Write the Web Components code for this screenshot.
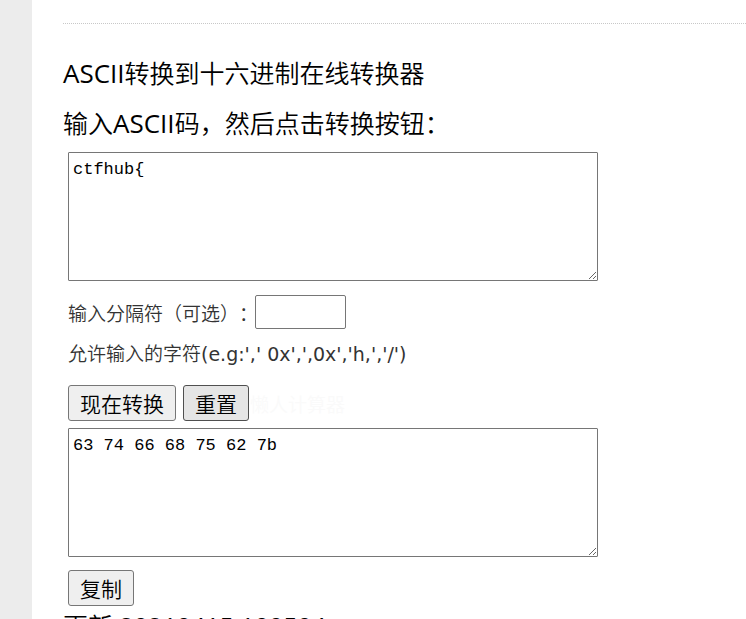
<!DOCTYPE html>
<html lang="zh-CN">
<head>
<meta charset="utf-8">
<title>ASCII转换到十六进制在线转换器</title>
<style>
  body {
    margin: 0;
    background: #fff;
    color: #333;
    font: 350 19px/40px "Open Sans", "Noto Sans CJK SC", sans-serif;
  }
  .latin { font-size: 26px; line-height: 1; font-weight: 400; }
  .stamp { font-weight: 400; }
</style>
</head>
<body>
<page-frame>
  <section-title><span class="latin">ASCII</span>转换到十六进制在线转换器</section-title>
  <section-title>输入<span class="latin">ASCII</span>码，然后点击转换按钮：</section-title>
  <hex-converter></hex-converter>
  <section-title compact>更新 <span class="stamp">20210415 100504</span></section-title>
</page-frame>
<script>
  function define(name, html) {
    customElements.define(name, class extends HTMLElement {
      constructor() {
        super();
        this.attachShadow({ mode: 'open' }).innerHTML = html;
      }
    });
  }

  define('page-frame', `
    <style>
      :host { display: flex; height: 100vh; overflow: hidden; }
      .gutter { flex: none; width: 32px; background: #ececec; }
      main { flex: 1; min-width: 0; padding: 23px 0 0 31px; }
      .rule { border: 0; border-top: 1px dotted #c8c8c8; margin: 0 0 24px; }
    </style>
    <div class="gutter"></div>
    <main><hr class="rule"><slot></slot></main>`);

  define('section-title', `
    <style>
      :host { display: block; color: #000; }
      h2 { margin: 0; font-size: 25px; line-height: 50px; font-weight: inherit; }
      :host([compact]) h2 { line-height: 40px; }
    </style>
    <h2><slot></slot></h2>`);

  define('text-area', `
    <style>
      :host { display: block; }
      textarea {
        display: block; box-sizing: border-box; width: 530px; max-width: 100%; height: 129px;
        margin: 0; padding: 4px; border: 1px solid #767676; border-radius: 1px;
        background: #fff; color: #000; overflow: auto; resize: both;
        font: 17px/26px "Liberation Mono", "Noto Sans CJK SC", monospace;
      }
    </style>
    <textarea></textarea>`);

  define('push-button', `
    <style>
      :host { display: block; }
      button {
        display: block; box-sizing: border-box; height: 36px; margin: 0; padding: 2px 11px 0;
        border: 1px solid #767676; border-radius: 3px; background: #efefef; color: #000;
        font: 350 21px/32px "Open Sans", "Noto Sans CJK SC", sans-serif;
      }
      :host([active]) button { background: #e5e5e5; border-color: #4f4f4f; }
    </style>
    <button type="button"><slot></slot></button>`);

  customElements.define('hex-converter', class extends HTMLElement {
    constructor() {
      super();
      const root = this.attachShadow({ mode: 'open' });
      root.innerHTML = `
        <style>
          :host { display: block; padding: 4px 5px 0; }
          .separator { display: flex; align-items: center; height: 34px; padding-top: 14px; }
          .separator label { padding-top: 4px; margin-right: -3px; text-spacing-trim: space-all; }
          input {
            box-sizing: border-box; width: 91px; height: 34px; margin: 0; padding: 2px 4px;
            border: 1px solid #767676; border-radius: 2px; background: #fff; font: inherit; color: #000;
          }
          .hint { height: 40px; padding: 5px 0 11px; }
          .hint span { font-family: "DejaVu Sans", sans-serif; font-weight: 400; }
          .actions { display: flex; align-items: center; gap: 7px; height: 36px; margin-bottom: 7px; }
          .mark { color: #fafafa; margin-left: -6px; padding-top: 4px; }
          .copy { display: flex; padding-top: 13px; }
        </style>
        <text-area id="source"></text-area>
        <div class="separator">
          <label for="sep">输入分隔符（可选）：</label><input id="sep" type="text">
        </div>
        <div class="hint">允许输入的字符<span>(e.g:',' 0x',',0x','h,','/')</span></div>
        <div class="actions">
          <push-button id="convert">现在转换</push-button>
          <push-button id="reset" active>重置</push-button>
          <span class="mark">懒人计算器</span>
        </div>
        <text-area id="result"></text-area>
        <div class="copy"><push-button id="copy">复制</push-button></div>`;
      const area = (id, label) => {
        const el = root.getElementById(id).shadowRoot.querySelector('textarea');
        el.setAttribute('aria-label', label);
        return el;
      };
      const source = area('source', 'ASCII');
      const result = area('result', '十六进制');
      const sep = root.getElementById('sep');
      const convert = () => {
        result.value = [...source.value]
          .map(c => c.charCodeAt(0).toString(16).padStart(2, '0'))
          .join(sep.value || ' ');
      };
      root.getElementById('convert').addEventListener('click', convert);
      root.getElementById('reset').addEventListener('click', () => {
        source.value = result.value = sep.value = '';
      });
      root.getElementById('copy').addEventListener('click', () => {
        result.select();
        document.execCommand('copy');
      });
      source.value = 'ctfhub{';
      convert();
    }
  });
</script>
</body>
</html>
